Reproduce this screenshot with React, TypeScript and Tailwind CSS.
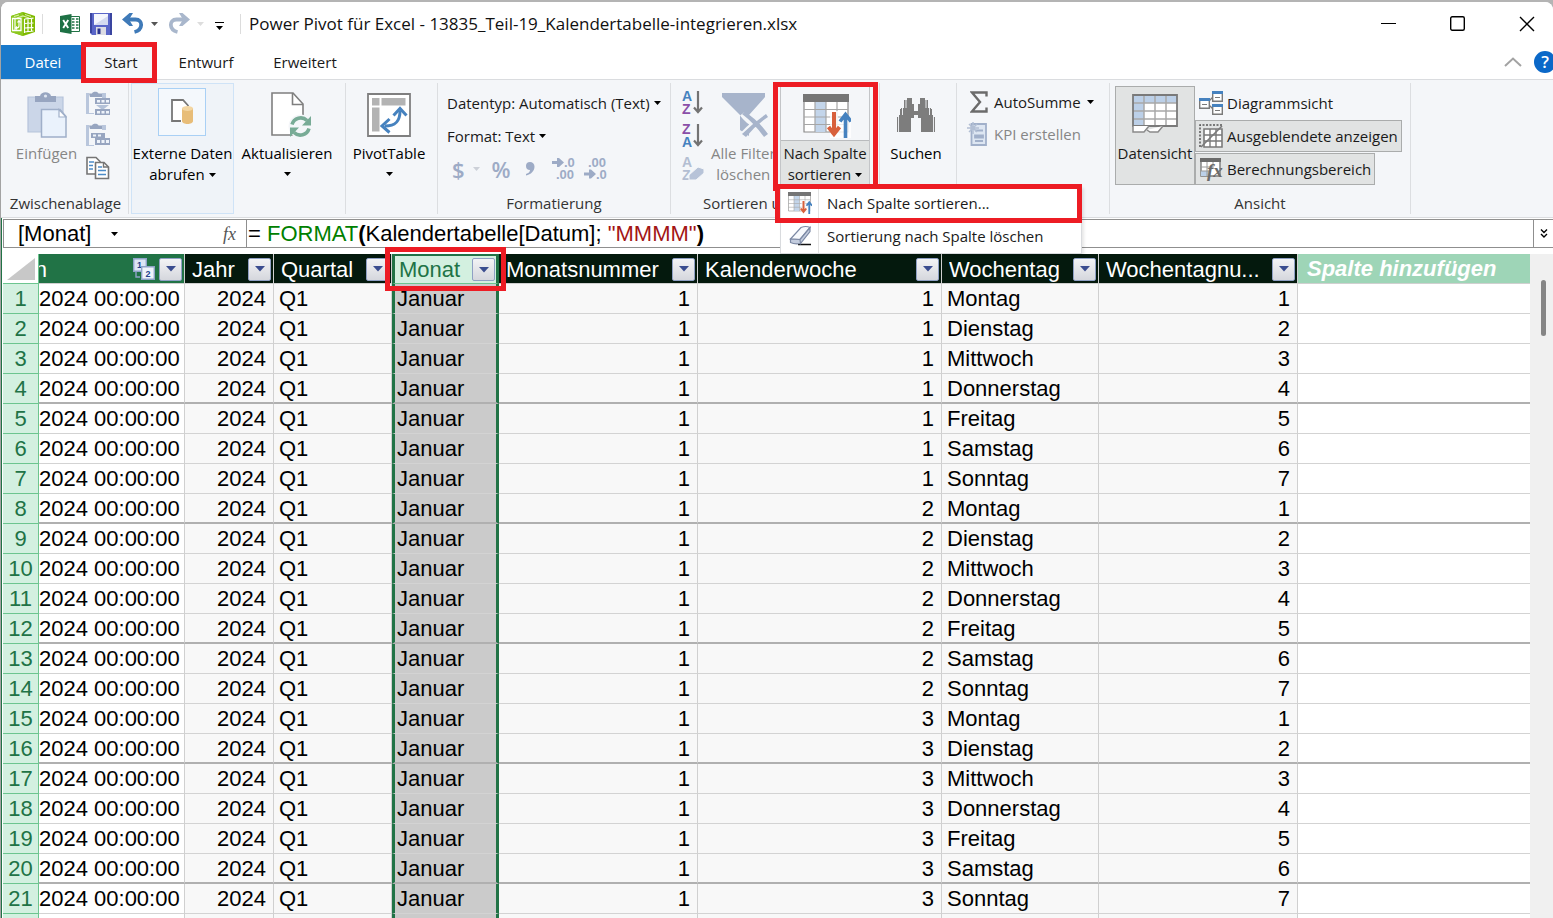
import React from 'react';
import { clsx } from 'clsx';

interface RibbonGroupProps {
  label?: string;
  className?: string;
  children: React.ReactNode;
}

interface LargeButtonProps {
  icon: React.ReactNode;
  lines: string[];
  menu?: boolean;
  disabled?: boolean;
  className?: string;
}

interface Column {
  name: string;
  width: string;
  align: 'left' | 'right';
  selected?: boolean;
  related?: boolean;
}

const WEEKDAYS = ['Montag', 'Dienstag', 'Mittwoch', 'Donnerstag', 'Freitag', 'Samstag', 'Sonntag'];

const COLUMNS: Column[] = [
  { name: 'Datum', width: 'w-[146px]', align: 'left', related: true },
  { name: 'Jahr', width: 'w-[89px]', align: 'right' },
  { name: 'Quartal', width: 'w-[118px]', align: 'left' },
  { name: 'Monat', width: 'w-[107px]', align: 'left', selected: true },
  { name: 'Monatsnummer', width: 'w-[199px]', align: 'right' },
  { name: 'Kalenderwoche', width: 'w-[244px]', align: 'right' },
  { name: 'Wochentag', width: 'w-[157px]', align: 'left' },
  { name: 'Wochentagnu...', width: 'w-[199px]', align: 'right' },
];

const ROWS = Array.from({ length: 22 }, (_, i) => [
  '2024 00:00:00',
  '2024',
  'Q1',
  'Januar',
  '1',
  String(Math.floor(i / 7) + 1),
  WEEKDAYS[i % 7],
  String((i % 7) + 1),
]);

const Caret = ({ className = 'text-black' }: { className?: string }) => (
  <svg viewBox="0 0 7 4" className={clsx('h-1 w-[7px] shrink-0', className)} fill="currentColor" aria-hidden="true">
    <path d="M0 0h7L3.5 4z" />
  </svg>
);

const Highlight = ({ className }: { className: string }) => (
  <div className={clsx('pointer-events-none absolute z-20 border-5 border-[#ed1c24]', className)} />
);

/* ---------- Icons ---------- */

const AppIcon = () => (
  <svg viewBox="0 0 26 26" className="h-[26px] w-[26px]" aria-hidden="true">
    <path d="M1 5 13 1l12 4v16l-12 4L1 21z" fill="#7fba00" />
    <path d="M1 5 13 1v24L1 21z" fill="#8cc81e" />
    <path d="M4 5.500 9 4M15 3.500l6 2M7 7l6-2 6 2" stroke="#d9f0a8" strokeWidth="1.200" fill="none" />
    <path d="M2.500 7.500h8.500v12H2.500z" fill="none" stroke="#fff" strokeWidth="1.300" />
    <path d="M5 8v11" stroke="#fff" strokeWidth="1.200" />
    <path d="M9 10v5q0 2-3 2M7.500 11.500 9 9.500l1.500 2M7 15.500 5.500 17 7 18.500" stroke="#fff" strokeWidth="1.200" fill="none" />
    <path d="M14.500 8v14M14.500 8l9-.800M14.500 12.500l9-.500M14.500 17l9-.400M14.500 21l9-1M18 7.500v14M21.500 7.500v13" stroke="#fff" strokeWidth="1.200" />
  </svg>
);

const ExcelIcon = () => (
  <svg viewBox="0 0 20 20" className="h-5 w-5" aria-hidden="true">
    <path d="M10 2.500h9.500v15H10z" fill="#fff" stroke="#217346" />
    <path d="M12 5h2.500M12 8h2.500M12 11h2.500M12 14h2.500M16 5h2.500M16 8h2.500M16 11h2.500M16 14h2.500" stroke="#217346" strokeWidth="1.600" />
    <path d="M0 2 11.500 0v20L0 18z" fill="#1e7145" />
    <path d="m3.200 6 5 8M8.200 6l-5 8" stroke="#fff" strokeWidth="1.900" />
  </svg>
);

const SaveIcon = () => (
  <svg viewBox="0 0 22 22" className="h-[22px] w-[22px]" aria-hidden="true">
    <path d="M0 0h22v22H2l-2-2z" fill="#5a66c8" />
    <path d="M0 0h2v20H0zM20 0h2v22h-2z" fill="#3a45a0" />
    <path d="M4 1h14v11H4z" fill="#f4f6fd" />
    <path d="M4 12 18 3v9z" fill="#d5dbf0" />
    <path d="M6 14h10v8H6z" fill="#dcdce4" />
    <path d="M7.500 15.500h3V21h-3z" fill="#2b3590" />
  </svg>
);

const UndoIcon = ({ flip }: { flip?: boolean }) => (
  <svg viewBox="0 0 22 21" className={clsx('h-[21px] w-[22px]', flip ? '-scale-x-100 text-[#a9b7cc]' : 'text-[#3f7ab8]')} aria-hidden="true">
    <path d="M3 6.500h10.500c8 0 7.500 10.500-1 12.500" fill="none" stroke="currentColor" strokeWidth="3.800" />
    <path d="M0 6.500 7.500 0h3.500L7 6.500l4 6.500H7.500z" fill="currentColor" />
  </svg>
);

const PasteIcon = () => (
  <svg viewBox="0 0 40 46" className="h-[46px] w-10" aria-hidden="true">
    <path d="M1 5h35v35H1z" fill="#cbd6e8" stroke="#b5c3da" strokeWidth="1.200" />
    <path d="M8 4h5c1-5 10-5 11 0h5v6H8z" fill="#97a5c0" />
    <circle cx="18.500" cy="4" r="1.600" fill="#dfe6f1" />
    <path d="M14.500 17.500H33l6 7V45H14.500z" fill="#eaf2fc" stroke="#9fafc9" strokeWidth="1.500" />
    <path d="M32 17.500V25h7z" fill="#fff" stroke="#9fafc9" strokeWidth="1.200" />
  </svg>
);

const PasteSmallIcon = ({ append }: { append?: boolean }) => (
  <svg viewBox="0 0 24 24" className="h-6 w-6" aria-hidden="true">
    <path d="M0 2h3v20h5v1H0zM16 2h4v5h-4z" fill="#b9c6dc" />
    <path d="M3 2.500h3C6.500 0 12 0 12.500 2.500H16V6H4z" fill="#97a5c0" />
    <path d={append ? 'M5 10h14v5H5z' : 'M9 7h15v6H9z'} fill="#97a5c0" />
    <path d={append ? 'M7 11.500h3v2H7zM12 11.500h3v2h-3z' : 'M11 9h3v2.500h-3zM15.500 9h3v2.500h-3zM20 9h3v2.500h-3z'} fill="#eef3fa" />
    {!append && <path d="M10 14h13l-6.500 5z" fill="#b3c1d8" />}
    <path d={append ? 'M9 15h15v7H9z' : 'M9 18h15v6H9z'} fill="#97a5c0" />
    <path d={append ? 'M11 17h3v3h-3zM15.500 17h3v3h-3zM20 17h3v3h-3z' : 'M11 20h3v2.500h-3zM15.500 20h3v2.500h-3zM20 20h3v2.500h-3z'} fill="#eef3fa" />
  </svg>
);

const CopyIcon = () => (
  <svg viewBox="0 0 24 24" className="h-6 w-6" aria-hidden="true">
    <path d="M1 1.500h9l4 4V18H1z" fill="#fff" stroke="#757575" strokeWidth="1.600" />
    <path d="M3 6h5M3 9.500h4M3 13h4" stroke="#4c8cc8" strokeWidth="1.400" />
    <path d="M9.500 6.500h8.500l4.500 4.500v11.500h-13z" fill="#fff" stroke="#757575" strokeWidth="1.600" />
    <path d="M17.500 6.500V11h5" fill="none" stroke="#757575" strokeWidth="1.400" />
    <path d="M12 11h4M12 14.500h8M12 18.500h8" stroke="#4c8cc8" strokeWidth="1.400" />
  </svg>
);

const ExternalDataIcon = () => (
  <span className="mb-[6px] flex h-12 w-12 items-center justify-center border border-[#a9d0f5] bg-[#f4f8fc]">
    <svg viewBox="0 0 24 26" className="h-[26px] w-6" aria-hidden="true">
      <path d="M2 1h12l5 5v17H2z" fill="#fff" />
      <path d="M11 22H2V1h11l5.500 6" fill="none" stroke="#777" strokeWidth="1.800" />
      <path d="M12 9h11v13c0 4-11 4-11 0z" fill="#e8bd78" />
      <ellipse cx="17.500" cy="9.500" rx="5.500" ry="2.500" fill="#f3d6a2" />
    </svg>
  </span>
);

const RefreshIcon = () => (
  <svg viewBox="0 0 40 46" className="ml-2 h-[46px] w-10" aria-hidden="true">
    <path d="M1 1h21l10 11v31H1z" fill="#fff" stroke="#7f7f7f" strokeWidth="1.600" />
    <path d="M21.500 1v11.500H32" fill="none" stroke="#7f7f7f" strokeWidth="1.600" />
    <circle cx="29.500" cy="34.500" r="12" fill="#f4f6f9" />
    <path d="M21 32.500a9 9 0 0 1 15-4M38 36.500a9 9 0 0 1-15 4" fill="none" stroke="#78ab96" strokeWidth="3.600" />
    <path d="M40 24v9.500h-9zM19 45v-9.500h9z" fill="#78ab96" />
  </svg>
);

const PivotIcon = () => (
  <svg viewBox="0 0 44 44" className="h-11 w-11" aria-hidden="true">
    <path d="M1 1h42v42H1z" fill="#fff" stroke="#7f7f7f" strokeWidth="1.800" />
    <path d="M5 5h7.500v7.500H5zM14.500 5h24v7.500h-24zM5 14.500h7.500v24H5z" fill="#b3b3b3" />
    <path d="M33 18c0 10-4 15-15 15" fill="none" stroke="#4682bf" strokeWidth="3" />
    <path d="m26.500 22.500 6.500-7 6.500 7M22.500 26l-7.500 7 7.500 6.500" fill="none" stroke="#4682bf" strokeWidth="3" />
  </svg>
);

const SortIcon = ({ top, bottom, eraser }: { top: string; bottom: string; eraser?: boolean }) => {
  const color = (letter: string) => (eraser ? '#b3bed2' : letter === 'A' ? '#4682bf' : '#8a4fa8');
  return (
    <svg viewBox="0 0 24 26" className="h-[26px] w-6 overflow-visible" aria-hidden="true">
      <text x="1" y="11" fontFamily="Liberation Sans, Arial, sans-serif" fontSize="14" fontWeight="700" fill={color(top)}>{top}</text>
      <text x="1" y="24" fontFamily="Liberation Sans, Arial, sans-serif" fontSize="14" fontWeight="700" fill={color(bottom)}>{bottom}</text>
      {eraser ? (
        <path d="m8 19 9-8 6 2v4l-8 7H8z" fill="#b7c3d8" stroke="#f4f6f9" />
      ) : (
        <path d="M17 1v21M13 17.500l4 4.500 4-4.500" fill="none" stroke="#737373" strokeWidth="2.200" />
      )}
    </svg>
  );
};

const ClearFilterIcon = () => (
  <svg viewBox="0 0 46 46" className="ml-1 h-[46px] w-[46px]" aria-hidden="true">
    <path d="M0 1h43v4L27 23v21l-9-6V23L0 5z" fill="#a7b4cb" />
    <path d="M20 22q6 8 12 10M45 23Q32 30 20 43" fill="none" stroke="#f4f6f9" strokeWidth="5" />
    <path d="M44 22Q31 31 20 42l4 3q10-12 22-20zM20 22q12 9 22 23l4-3Q36 28 23 20z" fill="#a7b4cb" />
  </svg>
);

const SortByColumnIcon = ({ className }: { className: string }) => (
  <svg viewBox="0 0 48 44" className={className} aria-hidden="true">
    <path d="M1 1h44v37H1z" fill="#fff" stroke="#8a8a8a" strokeWidth="1.200" />
    <path d="M12 8h11v30H12z" fill="#c3d5ea" />
    <path d="M1 15.500h44M1 23h44M1 30.500h44M12 8v30M23 8v30M34 8v30" stroke="#a6a6a6" strokeWidth="1.200" />
    <path d="M0 0h46v8H0z" fill="#757575" />
    <path d="M27 17h8v27h-8zM35 24h13v20H35z" fill="#fff" fillOpacity=".8" />
    <path d="M31 18v22M25.500 33l5.500 7 5.500-7" fill="none" stroke="#d8603c" strokeWidth="4" />
    <path d="M42.500 44V22M37 27.500l5.500-7 5.500 7" fill="none" stroke="#4682bf" strokeWidth="3.600" />
  </svg>
);

const EraserIcon = () => (
  <svg viewBox="0 0 24 22" className="h-[22px] w-6" aria-hidden="true">
    <path d="M9 19.500h13" stroke="#111" strokeWidth="1.600" />
    <path d="M1.500 14 12 2.500q5-2 9 0L11 14.500z" fill="#f7f9fc" stroke="#7c89a4" strokeWidth="1.200" />
    <path d="M21 2.500v4L11.500 18.500 11 14.500zM1.500 14l9.500.5.500 4q-6 1-10-1z" fill="#c3ccde" stroke="#7c89a4" strokeWidth="1.200" />
  </svg>
);

const BinocularsIcon = () => (
  <svg viewBox="0 0 40 36" className="h-9 w-10" aria-hidden="true">
    <g fill="#7d7d7d">
      <path d="M11 1h5v6h2v7h4V7h2V1h5v2h3v8h3v7h2v17H25V21h-3v-3h-4v3h-3v14H3V18h2v-7h3V3h3z" />
      <path d="M1 20h2v15H1zM37 20h2v15h-2zM4 12h1v6H4zM35 12h1v6h-1z" />
    </g>
    <path d="M2.500 17v18M6.500 10v8M37.500 17v18M33.500 10v8M10 3v8M30 3v8" stroke="#f4f6f9" strokeWidth=".9" />
  </svg>
);

const SigmaIcon = () => (
  <svg viewBox="0 0 18 22" className="h-[22px] w-[18px]" aria-hidden="true">
    <path d="M16.500 5.500V1.500H2L10 11 2 20.500h14.500v-4" fill="none" stroke="#6b6b6b" strokeWidth="2.400" />
  </svg>
);

const KpiIcon = () => (
  <svg viewBox="0 0 20 24" className="h-6 w-5" aria-hidden="true">
    <path d="M4.500 2h14.500v21h-14.500z" fill="#dde6f2" stroke="#a1b0ca" strokeWidth="1.800" />
    <path d="M8 8.500h8M8 13.500h8v2H8zM8 19h8" stroke="#a1b0ca" strokeWidth="1.800" fill="none" />
    <path d="M6 0v12M0 6h12M2 2l8 8M10 2l-8 8" stroke="#b2bfd4" strokeWidth="1.500" />
  </svg>
);

const DataViewIcon = () => (
  <svg viewBox="0 0 46 40" className="h-10 w-[46px]" aria-hidden="true">
    <path d="M1 1h44v31H1z" fill="#fff" />
    <path d="M1 1h44v8H1zM1 1h11v31H1z" fill="#bcd0e8" />
    <path d="M12 1v31M23 1v31M34 1v31M1 9h44M1 17h44M1 25h44" stroke="#a8a8a8" strokeWidth="1.500" />
    <path d="M1 1h44v31H1z" fill="none" stroke="#7a7a7a" strokeWidth="1.800" />
    <path d="M1 32v6h11l5-6M15 36l3 2h8l5-6" fill="#fff" stroke="#8a8a8a" strokeWidth="1.500" />
  </svg>
);

const DiagramIcon = () => (
  <svg viewBox="0 0 24 24" className="h-6 w-6" aria-hidden="true">
    <path d="M9 11 15 5M9 13l6 6" stroke="#7a7a7a" strokeWidth="1.400" />
    <path d="M.7 7.700h9.600v9.600H.7zM13.700.7h9.600v9.600h-9.600zM13.700 13.700h9.600v9.600h-9.600z" fill="#fff" stroke="#7a7a7a" strokeWidth="1.400" />
    <path d="M0 7h11v3H0zM13 0h11v3H13zM13 13h11v3H13z" fill="#4682bf" />
    <path d="M3 13.500h5M16 6.500h5M16 19.500h5" stroke="#7a7a7a" />
  </svg>
);

const HiddenIcon = () => (
  <svg viewBox="0 0 24 24" className="h-6 w-6" aria-hidden="true">
    <path d="M5 5h18v18H5z" fill="#fff" stroke="#7a7a7a" strokeWidth="1.600" />
    <path d="M11 5v18M17 5v18M5 11h18M5 17h18" stroke="#7a7a7a" strokeWidth="1.400" />
    <path d="M1 23V1h22" fill="none" stroke="#555" strokeWidth="1.500" strokeDasharray="2 1.500" />
    <path d="M2 23 23 2" stroke="#7a7a7a" strokeWidth="1.600" />
  </svg>
);

const CalcAreaIcon = () => (
  <svg viewBox="0 0 24 24" className="h-6 w-6 overflow-visible" aria-hidden="true">
    <path d="M2 2h19v17H2z" fill="#fff" stroke="#7a7a7a" strokeWidth="1.400" />
    <path d="M2 14h8v5H2z" fill="#bcd0e8" />
    <path d="M8 5v14M14 5v6M2 10h12M2 14h8" stroke="#9a9a9a" />
    <path d="M1 1h21v4H1z" fill="#6b6b6b" />
    <text x="8" y="20" fontFamily="Liberation Serif, Times New Roman, serif" fontSize="19" fontWeight="700" fontStyle="italic" fill="#6b6b6b">fx</text>
  </svg>
);

const RelationIcon = () => (
  <svg viewBox="0 0 22 22" className="h-[22px] w-[22px] shrink-0" aria-hidden="true">
    <path d="M.7.7h12.600v12.600H.7z" fill="#dce6f5" stroke="#8fa3c8" strokeWidth="1.400" />
    <text x="4" y="10" fontFamily="Liberation Sans, Arial, sans-serif" fontSize="9" fontWeight="700" fill="#24428c">1</text>
    <path d="M3 14v5h4" fill="none" stroke="#8fa3c8" strokeWidth="1.400" />
    <path d="M8.700 8.700h12.600v12.600H8.700z" fill="#eef3fb" stroke="#8fa3c8" strokeWidth="1.400" />
    <text x="12.500" y="18.500" fontFamily="Liberation Sans, Arial, sans-serif" fontSize="9" fontWeight="700" fill="#24428c">2</text>
  </svg>
);

/* ---------- Ribbon ---------- */

const RibbonGroup: React.FC<RibbonGroupProps> = ({ label, className, children }) => (
  <section className={clsx('my-[3px] flex shrink-0 flex-col border-r border-[#dcdee1]', className)}>
    <div className="flex flex-1">{children}</div>
    {label && <div className="mb-px truncate text-center leading-5 text-[#333]">{label}</div>}
  </section>
);

const LargeButton: React.FC<LargeButtonProps> = ({ icon, lines, menu, disabled, className }) => (
  <button
    type="button"
    disabled={disabled}
    className={clsx('flex flex-col items-center whitespace-nowrap', disabled ? 'text-[#868686]' : 'text-black', className)}
  >
    <span className="flex h-14 items-center pt-2">{icon}</span>
    {lines.map((line, i) => (
      <span key={line} className={clsx('flex items-center gap-1 leading-[21px]', i === 0 && 'mt-1')}>
        {line}
        {menu && lines.length > 1 && i === lines.length - 1 && <Caret />}
      </span>
    ))}
    {menu && lines.length === 1 && (
      <span className="mt-2">
        <Caret />
      </span>
    )}
  </button>
);

const TitleBar = () => (
  <header className="flex h-[43px] shrink-0 items-center bg-white pr-[18px] pl-[9px]">
    <AppIcon />
    <div className="mr-[17px] ml-[6px] h-5 w-px bg-[#dcdcdc]" />
    <div className="flex items-center gap-[10px]">
      <ExcelIcon />
      <button type="button" aria-label="Speichern"><SaveIcon /></button>
      <button type="button" aria-label="Rückgängig" className="flex items-center gap-[7px]">
        <UndoIcon />
        <Caret className="text-[#555]" />
      </button>
      <button type="button" aria-label="Wiederholen" className="flex items-center gap-[7px]" disabled>
        <UndoIcon flip />
        <Caret className="text-[#ddd]" />
      </button>
      <button type="button" aria-label="Symbolleiste anpassen" className="ml-px flex flex-col items-center gap-[3px] pt-1">
        <span className="h-px w-[9px] bg-black" />
        <Caret />
      </button>
    </div>
    <div className="mr-2 ml-4 h-5 w-px bg-[#dcdcdc]" />
    <h1 className="truncate text-[17px] text-[#111]">Power Pivot für Excel - 13835_Teil-19_Kalendertabelle-integrieren.xlsx</h1>
    <div className="ml-auto flex items-center gap-[54px]">
      <button type="button" aria-label="Minimieren" className="h-px w-[15px] bg-black" />
      <button type="button" aria-label="Maximieren">
        <svg viewBox="0 0 15 15" className="h-[15px] w-[15px]" fill="none" stroke="#000" strokeWidth="1.400" aria-hidden="true">
          <rect x=".7" y=".7" width="13.600" height="13.600" rx="1.500" />
        </svg>
      </button>
      <button type="button" aria-label="Schließen">
        <svg viewBox="0 0 16 16" className="h-4 w-4" stroke="#000" strokeWidth="1.400" aria-hidden="true">
          <path d="m1 1 14 14M15 1 1 15" />
        </svg>
      </button>
    </div>
  </header>
);

const TabBar = () => (
  <nav className="flex h-[34px] shrink-0 items-stretch bg-white">
    <button type="button" className="w-20 bg-[#1979ca] pl-1 text-white">Datei</button>
    <div className="relative flex w-[76px]">
      <button type="button" className="w-full bg-[#f4f6f9] pl-1">Start</button>
      <Highlight className="-top-[3px] right-0 -bottom-1 left-0" />
    </div>
    <button type="button" className="w-[94px] pl-1">Entwurf</button>
    <button type="button" className="w-[104px] pl-1">Erweitert</button>
    <div className="-mr-[3px] ml-auto flex items-center gap-3">
      <button type="button" aria-label="Menüband reduzieren">
        <svg viewBox="0 0 18 10" className="h-[10px] w-[18px]" fill="none" stroke="#a3a3a3" strokeWidth="2" aria-hidden="true">
          <path d="m1 9 8-7.500L17 9" />
        </svg>
      </button>
      <button type="button" aria-label="Hilfe" className="h-[22px] w-[22px] rounded-full bg-[#0b68c8] text-[17px] leading-[22px] font-semibold text-white">?</button>
    </div>
  </nav>
);

const SortMenu = () => (
  <div className="absolute top-[103px] left-0 z-30 w-[302px] border border-[#d9dbde] bg-white shadow-[2px_2px_3px_rgba(0,0,0,0.1)]" role="menu">
    <button type="button" role="menuitem" className="flex h-8 w-full items-center">
      <span className="flex h-8 w-[38px] items-center border-r border-[#e2e2e2] pl-[7px]">
        <SortByColumnIcon className="h-[22px] w-6" />
      </span>
      <span className="pl-2">Nach Spalte sortieren...</span>
    </button>
    <button type="button" role="menuitem" className="flex h-[34px] w-full items-center">
      <span className="flex h-[34px] w-[38px] items-center border-r border-[#e2e2e2] pl-2">
        <EraserIcon />
      </span>
      <span className="pl-2">Sortierung nach Spalte löschen</span>
    </button>
    <Highlight className="-top-[3px] -right-px bottom-[30px] -left-[6px]" />
  </div>
);

const Ribbon = () => (
  <div className="relative z-10 flex h-[139px] shrink-0 border-y border-[#dadcdf] bg-[#f4f6f9] pl-[2px]">
    <RibbonGroup label="Zwischenablage" className="w-[126px]">
      <LargeButton icon={<PasteIcon />} lines={['Einfügen']} disabled className="w-[83px] pl-1" />
      <div className="flex flex-col gap-2 pt-2">
        <button type="button" aria-label="Anfügen einfügen" disabled><PasteSmallIcon /></button>
        <button type="button" aria-label="Ersetzen einfügen" disabled><PasteSmallIcon append /></button>
        <button type="button" aria-label="Kopieren" className="pt-px"><CopyIcon /></button>
      </div>
    </RibbonGroup>

    <div className="my-[3px] ml-[2px] flex w-[103px] shrink-0 justify-center border border-[#cfe3f7] bg-[#eff3f8]">
      <LargeButton icon={<ExternalDataIcon />} lines={['Externe Daten', 'abrufen']} menu className="-mt-px" />
    </div>

    <RibbonGroup className="w-[112px]">
      <LargeButton icon={<RefreshIcon />} lines={['Aktualisieren']} menu className="w-[106px]" />
    </RibbonGroup>
    <RibbonGroup className="w-[92px]">
      <LargeButton icon={<PivotIcon />} lines={['PivotTable']} menu className="w-[86px]" />
    </RibbonGroup>

    <RibbonGroup label="Formatierung" className="w-[233px]">
      <div className="flex flex-col items-start pt-[10px] pl-[9px]">
        <button type="button" className="flex items-center gap-1 leading-5">Datentyp: Automatisch (Text) <Caret /></button>
        <button type="button" className="mt-[13px] flex items-center gap-1 leading-5">Format: Text <Caret /></button>
        <div className="mt-[11px] flex items-center pl-[5px] font-semibold text-[#9dabc6]">
          <button type="button" disabled aria-label="Währung" className="flex items-center gap-2 text-[22px] leading-6">$ <Caret className="text-[#ccd0d8]" /></button>
          <button type="button" disabled aria-label="Prozent" className="ml-3 text-[22px] leading-6">%</button>
          <button type="button" disabled aria-label="Tausendertrennzeichen" className="ml-[14px]">
            <svg viewBox="0 0 10 14" className="h-[14px] w-[10px]" fill="currentColor" aria-hidden="true">
              <path d="M5 0a4.500 4.500 0 0 1 4.500 4.500C9.500 9 6 12.500 1 13.500V12c2.500-.8 4-2 4-4A4 4 0 0 1 5 0z" />
            </svg>
          </button>
          {['→.0|.00', '.00|→.0'].map((pair, i) => (
            <button key={pair} type="button" disabled aria-label={i === 0 ? 'Dezimalstelle hinzufügen' : 'Dezimalstelle löschen'} className={i === 0 ? 'ml-[17px]' : 'ml-2'}>
              <svg viewBox="0 0 24 24" className="h-6 w-6 overflow-visible" fill="currentColor" aria-hidden="true">
                <path d={i === 0 ? 'M0 4h5V1h2l5 4.500-5 4.500H5V7H0z' : 'M0 15.500h5v-3h2l5 4.500-5 4.500H5v-3H0z'} />
                <text x={i === 0 ? 12 : 4} y="10" fontSize="13" fontWeight="700" fontFamily="Liberation Sans, Arial, sans-serif">{i === 0 ? '.0' : '.00'}</text>
                <text x={i === 0 ? 4 : 12} y="22" fontSize="13" fontWeight="700" fontFamily="Liberation Sans, Arial, sans-serif">{i === 0 ? '.00' : '.0'}</text>
              </svg>
            </button>
          ))}
        </div>
      </div>
    </RibbonGroup>

    <section className="relative my-[3px] flex w-[209px] shrink-0 border-r border-[#dcdee1]">
      <div className="flex w-[109px] flex-col overflow-hidden">
        <div className="flex flex-1">
          <div className="flex flex-col gap-[7px] pt-[7px] pl-[10px]">
            <button type="button" aria-label="Aufsteigend sortieren"><SortIcon top="A" bottom="Z" /></button>
            <button type="button" aria-label="Absteigend sortieren"><SortIcon top="Z" bottom="A" /></button>
            <button type="button" aria-label="Sortierung löschen" disabled><SortIcon top="A" bottom="Z" eraser /></button>
          </div>
          <LargeButton icon={<ClearFilterIcon />} lines={['Alle Filter', 'löschen']} disabled className="pl-[6px]" />
        </div>
        <div className="mb-px pl-8 leading-5 whitespace-nowrap text-[#333]">Sortieren und filtern</div>
      </div>
      <div className="relative">
        <div className="relative flex h-[101px] w-[90px] flex-col border-x border-[#c3c5c8]">
          <button type="button" className="flex h-[57px] shrink-0 items-end justify-center pb-[2px] pl-1" aria-label="Nach Spalte sortieren">
            <SortByColumnIcon className="h-11 w-12" />
          </button>
          <button type="button" className="flex flex-1 flex-col items-center border-t border-[#b9bbbd] bg-[#e1e3e3] pt-[2px] leading-[21px] whitespace-nowrap">
            <span>Nach Spalte</span>
            <span className="flex items-center gap-1">sortieren <Caret /></span>
          </button>
        </div>
        <Highlight className="-top-px -right-2 bottom-[23px] -left-[7px]" />
        <SortMenu />
      </div>
    </section>

    <RibbonGroup className="w-[77px]">
      <LargeButton icon={<BinocularsIcon />} lines={['Suchen']} className="w-full pr-1" />
    </RibbonGroup>

    <RibbonGroup className="w-[153px]">
      <div className="flex flex-col gap-2 pt-[7px] pl-[10px]">
        <button type="button" className="flex h-6 items-center gap-[6px] pl-[3px]">
          <SigmaIcon /> AutoSumme <Caret />
        </button>
        <button type="button" disabled className="flex h-6 items-center gap-[7px] text-[#868686]">
          <KpiIcon /> KPI erstellen
        </button>
      </div>
    </RibbonGroup>

    <RibbonGroup label="Ansicht" className="w-[301px]">
      <div className="flex items-start pt-[3px] pl-[5px] whitespace-nowrap">
        <button type="button" className="flex h-[99px] w-20 flex-col items-center border border-[#aaacac] bg-[#e1e3e3]">
          <span className="flex h-12 items-center pt-[5px]"><DataViewIcon /></span>
          <span className="mt-2 leading-[21px]">Datensicht</span>
        </button>
        <div className="flex flex-col items-start">
          <button type="button" className="flex h-[34px] items-center gap-1 px-1"><DiagramIcon /> Diagrammsicht</button>
          <button type="button" className="flex h-8 items-center gap-1 border border-[#aaacac] bg-[#e1e3e3] px-[3px]"><HiddenIcon /> Ausgeblendete anzeigen</button>
          <button type="button" className="mt-px flex h-8 items-center gap-1 border border-[#aaacac] bg-[#e1e3e3] px-[3px]"><CalcAreaIcon /> Berechnungsbereich</button>
        </div>
      </div>
    </RibbonGroup>
  </div>
);

/* ---------- Formula bar and grid ---------- */

const FormulaBar = () => (
  <div className="mt-px flex h-[29px] shrink-0 items-stretch border-y border-l border-[#8f8f8f] bg-white font-['Liberation_Sans',Arial,sans-serif] text-[22px] leading-[27px] text-black">
    <div className="flex w-[243px] shrink-0 items-center border-r border-[#8f8f8f] pr-[10px] pl-[14px]">
      <button type="button" className="flex items-center gap-5">[Monat] <Caret /></button>
      <span className="ml-auto font-['Liberation_Serif',serif] text-lg text-[#555] italic">fx</span>
    </div>
    <div className="min-w-0 flex-1 truncate pl-[1px] whitespace-pre">
      = <span className="text-[#008000]">FORMAT</span><b>(</b>Kalendertabelle[Datum]; <span className="text-[#a31515]">"MMMM"</span><b>)</b>
    </div>
    <button type="button" aria-label="Bearbeitungsleiste erweitern" className="flex w-5 shrink-0 items-center justify-center border-l border-[#8f8f8f]">
      <svg viewBox="0 0 8 9" className="h-[9px] w-2" fill="none" stroke="#000" strokeWidth="1.400" aria-hidden="true">
        <path d="m1 .5 3 3 3-3M1 5l3 3 3-3" />
      </svg>
    </button>
  </div>
);

const FilterButton = ({ column }: { column: string }) => (
  <button
    type="button"
    aria-label={`${column} filtern`}
    className="flex h-[23px] w-[23px] shrink-0 items-center justify-center rounded-xs border border-[#8fa0c4] bg-linear-to-b from-[#f3f3f5] to-[#d5d7dd]"
  >
    <svg viewBox="0 0 10 6" className="h-[6px] w-[10px]" fill="#3b4d8f" aria-hidden="true">
      <path d="M0 0h10L5 5.500z" />
    </svg>
  </button>
);

const HeaderCell = ({ column }: { column: Column }) => (
  <th
    scope="col"
    className={clsx(
      'relative h-[30px] p-0 text-left leading-[27px] font-normal',
      column.selected && 'border-x-3 border-t-2 border-b border-[#217346] border-b-[#6cc58f] bg-[#d3f0e0] text-[#217346]',
      column.related && 'border-r border-b border-[#d0d0d0] bg-[#217346] pt-px text-white',
      !column.selected && !column.related && 'border-r border-b border-[#d0d0d0] bg-[#04190d] pt-px text-white',
    )}
  >
    <div className={clsx('flex items-center', column.selected ? 'pr-px pl-1' : 'pr-[2px]', !column.selected && !column.related && 'pl-[7px]')}>
      {column.related ? (
        <>
          <span className="flex w-2 justify-end overflow-hidden">n</span>
          <span className="ml-auto flex items-center gap-1"><RelationIcon /><FilterButton column={column.name} /></span>
        </>
      ) : (
        <>
          <span className="min-w-0 flex-1 overflow-hidden whitespace-nowrap">{column.name}</span>
          <FilterButton column={column.name} />
        </>
      )}
    </div>
    {column.selected && <Highlight className="-top-[9px] -right-[10px] -bottom-2 -left-[10px]" />}
  </th>
);

const DataGrid = () => (
  <div className="mt-[6px] flex min-h-0 flex-1">
    <div className="min-w-0 flex-1">
      <table className="w-full table-fixed border-separate border-spacing-0 font-['Liberation_Sans',Arial,sans-serif] text-[22px] leading-[26px] text-black">
        <colgroup>
          <col className="w-9" />
          {COLUMNS.map((column) => <col key={column.name} className={column.width} />)}
          <col />
        </colgroup>
        <thead>
          <tr>
            <th className="border-r border-b border-[#6cc58f] bg-white p-0">
              <svg viewBox="0 0 28 22" className="ml-1 h-[22px] w-7" fill="#c8c8c8" aria-hidden="true">
                <path d="M28 0v22H0z" />
              </svg>
            </th>
            {COLUMNS.map((column) => <HeaderCell key={column.name} column={column} />)}
            <th scope="col" className="border-b border-[#d0d0d0] bg-[#9ed5b7] p-0 pt-px pl-[9px] text-left font-bold whitespace-nowrap text-white italic">
              Spalte hinzufügen
            </th>
          </tr>
        </thead>
        <tbody>
          {ROWS.map((row, i) => {
            const rule = (i + 1) % 4 === 0 ? 'border-b-2 border-b-[#b0b0b0]' : 'border-b border-b-[#d3d3d3]';
            return (
              <tr key={i} className="h-[30px]">
                <th scope="row" className="border-r border-b border-[#6cc58f] bg-[#d3f0e0] p-0 pt-[2px] text-center align-top font-normal text-[#217346]">{i + 1}</th>
                {row.map((value, c) => {
                  const column = COLUMNS[c];
                  return (
                    <td
                      key={column.name}
                      className={clsx(
                        'h-[30px] overflow-hidden p-0 pt-[2px] align-top whitespace-nowrap',
                        rule,
                        column.selected ? 'border-x-3 border-x-[#217346] bg-[#cbcbcb] pl-[2px]' : 'border-r border-r-[#d0d0d0]',
                        column.related && 'bg-white',
                        !column.selected && !column.related && 'bg-[#f8f8f8]',
                        column.align === 'right' ? 'pr-[7px] text-right' : !column.selected && !column.related && 'pl-[5px]',
                      )}
                    >
                      {value}
                    </td>
                  );
                })}
                <td className={clsx('bg-white p-0', rule)} />
              </tr>
            );
          })}
        </tbody>
      </table>
    </div>
    <div className="flex w-[23px] shrink-0 justify-center bg-[#f0f0f0] pt-[26px] pl-1">
      <div className="h-14 w-[5px] rounded-full bg-[#858585]" />
    </div>
  </div>
);

export default function App() {
  return (
    <div className="flex h-screen flex-col overflow-hidden bg-[#b4b4b4] pt-[2px] font-['Open_Sans','Segoe_UI',sans-serif] text-[15px] text-[#1a1a1a]">
      <div className="flex min-h-0 flex-1 flex-col overflow-hidden rounded-t-lg border-l border-[#a3a3a3] bg-white">
        <TitleBar />
        <TabBar />
        <Ribbon />
        <div className="flex min-h-0 flex-1 flex-col border-l border-[#217346] pl-px">
          <FormulaBar />
          <DataGrid />
        </div>
      </div>
    </div>
  );
}
